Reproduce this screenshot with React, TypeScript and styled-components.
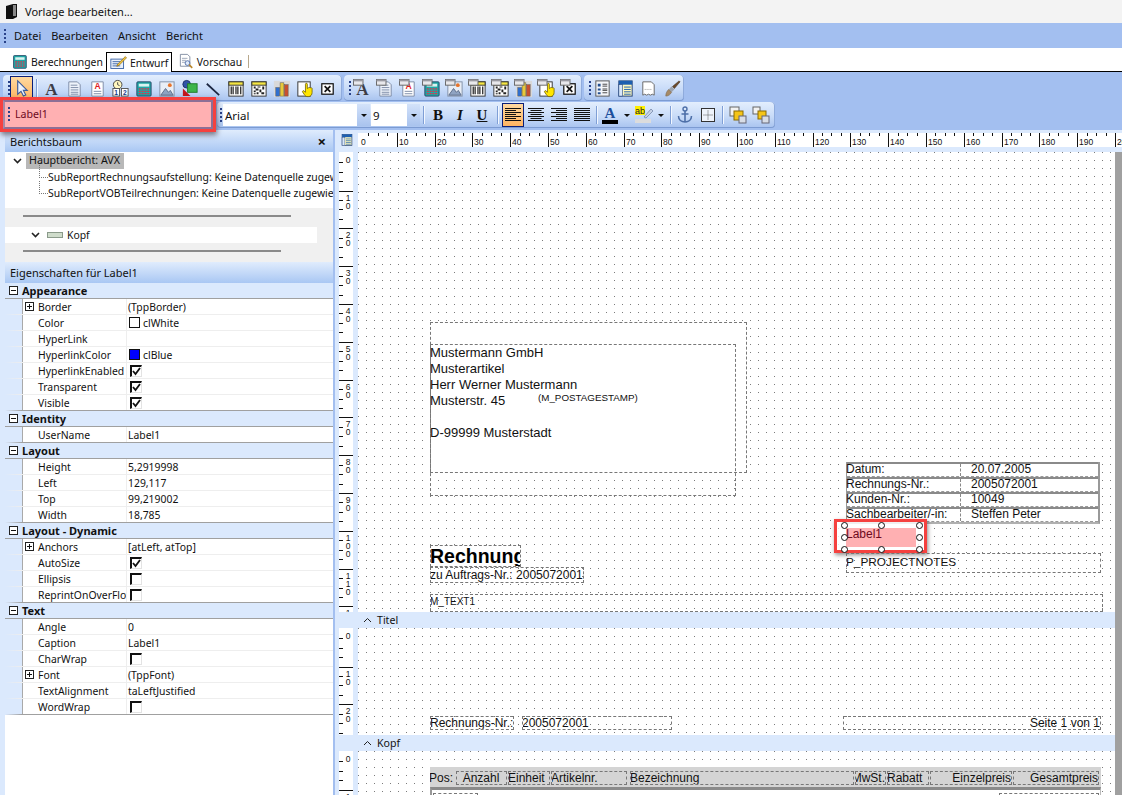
import styled, { createGlobalStyle } from 'styled-components';

const GlobalStyle = createGlobalStyle`
  html, body { margin: 0; padding: 0; background: #fff; }
  body { font-family: "Noto Sans", "Liberation Sans", sans-serif; font-size: 10.4px; color: #111; }
  * { box-sizing: border-box; }
`;

const Page = styled.div`
  width: 1122px;
  height: 795px;
  overflow: hidden;
  display: flex;
  flex-direction: column;
`;

const TitleBar = styled.div`
  height: 23px;
  background: #f3f3f3;
  display: flex;
  align-items: center;
  gap: 8px;
  padding-left: 6px;
  font-size: 11px;
`;

const MenuBar = styled.div`
  height: 25px;
  background: #a3bff0;
  display: flex;
  align-items: center;
  padding-left: 4px;
`;

const Grip = styled.i`
  display: block;
  flex: none;
  width: 2px;
  height: 14px;
  background: repeating-linear-gradient(#29428a 0 2px, transparent 2px 4px);
`;

const MenuItem = styled.span<{ $gap: number }>`
  font-size: 11px;
  margin-left: ${p => p.$gap}px;
`;

const TabStrip = styled.div`
  height: 24px;
  background: #fff;
  border-bottom: 1px solid #000;
  display: flex;
  align-items: flex-end;
  padding-left: 8px;
`;

const Tab = styled.div<{ $active?: boolean; $w: number; $gap?: number }>`
  width: ${p => p.$w}px;
  height: 19px;
  margin-left: ${p => p.$gap ?? 0}px;
  display: flex;
  align-items: center;
  gap: 3px;
  padding-left: 3px;
  font-size: 10.4px;
  background: #fff;
  ${p => (p.$active ? 'border: 1px solid #000; border-bottom: 0; margin-bottom: -1px; height: 20px;' : '')}
`;

const TabDivider = styled.i`
  width: 1px;
  height: 13px;
  background: #b8a88c;
  margin-left: 3px;
`;

const ToolArea = styled.div`
  height: 58px;
  background: #a3bff0;
  padding-top: 3px;
  display: flex;
  flex-direction: column;
  gap: 1px;
`;

const ToolRow = styled.div`
  display: flex;
  height: 26px;
  gap: 2px;
  padding-left: 3px;
`;

const Toolbar = styled.div<{ $w: number; $pad?: number }>`
  width: ${p => p.$w}px;
  height: 26px;
  display: flex;
  align-items: center;
  padding-left: ${p => p.$pad ?? 5}px;
  border-radius: 4px;
  background: linear-gradient(#e3eefd, #c8dbf8 55%, #a8c3ef);
  box-shadow: inset 0 -1px 0 #7c9bd2, inset -1px 0 0 #8fabdc;
`;

const ToolButton = styled.div<{ $on?: boolean; $w?: number }>`
  flex: none;
  width: ${p => p.$w ?? 23}px;
  height: 24px;
  display: flex;
  align-items: center;
  justify-content: center;
  font-family: "Liberation Serif", serif;
  font-size: 15px;
  ${p => (p.$on ? 'background: linear-gradient(#ffd9a0, #ffb562); border: 1px solid #0b1f78;' : '')}
`;

const ToolSep = styled.i<{ $m?: number }>`
  flex: none;
  width: 1px;
  height: 18px;
  margin: 0 ${p => p.$m ?? 3}px;
  background: #7f9fd6;
  box-shadow: 1px 0 0 #f2f7ff;
`;

const ArrowCaret = styled.i`
  flex: none;
  width: 0;
  height: 0;
  margin: 0 4px;
  border: 3px solid transparent;
  border-top: 3px solid #111;
  border-bottom: 0;
`;

const HighlightedBar = styled.div`
  position: relative;
  z-index: 3;
  width: 210px;
  height: 29px;
  margin: -2px 2px 0 0;
  display: flex;
  align-items: center;
  padding: 0 0 2px 3px;
  gap: 5px;
  background: #ffb0b2;
  border: 2px solid #8d6f96;
  border-left-color: #a88aa6;
  color: #6d0a1e;
  font-size: 10.6px;
  box-shadow: 0 0 0 3px #f5413f, 1px 3px 5px 3px rgba(40, 30, 40, 0.55);
`;

const ComboBox = styled.div<{ $w: number }>`
  width: ${p => p.$w}px;
  height: 22px;
  margin-left: 1px;
  background: #fff;
  display: flex;
  align-items: center;
  justify-content: space-between;
  padding-left: 2px;
  font-size: 11.5px;
`;

const ComboArrow = styled.span`
  width: 13px;
  height: 100%;
  background: linear-gradient(#d3e2fa, #a9c3ee);
  display: flex;
  align-items: center;
  justify-content: center;
  &::after {
    content: '';
    border: 3px solid transparent;
    border-top: 3px solid #111;
    border-bottom: 0;
  }
`;

const Main = styled.div`
  flex: 1;
  min-height: 0;
  display: flex;
`;

const SidePanel = styled.div`
  width: 335px;
  flex: none;
  display: flex;
  flex-direction: column;
  background: #fff;
  border-left: 5px solid #dbe9fd;
  border-right: 2px solid #a3bff0;
  overflow: hidden;
`;

const PanelHead = styled.div<{ $h: number }>`
  height: ${p => p.$h}px;
  flex: none;
  display: flex;
  align-items: center;
  justify-content: space-between;
  padding: 0 7px 0 5px;
  background: linear-gradient(#e0ecfd, #a9c7f3);
  font-size: 11px;
  b { font-size: 15px; font-weight: 700; line-height: 1; }
`;

const TreeBox = styled.div`
  height: 56px;
  flex: none;
  padding-top: 1px;
  overflow: hidden;
  white-space: nowrap;
`;

const TreeRoot = styled.div`
  height: 16px;
  display: flex;
  align-items: center;
  padding-left: 8px;
  gap: 4px;
  span { background: #b8b8b8; height: 16px; padding: 0 4px 0 3px; line-height: 15px; font-size: 10.7px; }
`;

const TreeChild = styled.div`
  position: relative;
  height: 16px;
  padding-left: 43px;
  line-height: 16px;
  &::before {
    content: '';
    position: absolute;
    left: 34px;
    top: -4px;
    width: 8px;
    height: 12px;
    border-left: 1px dotted #777;
    border-bottom: 1px dotted #777;
  }
`;

const Shelf = styled.div<{ $h: number; $w: number }>`
  height: ${p => p.$h}px;
  flex: none;
  background: #f0f0f0;
  padding: 7px 0 0 18px;
  &::before {
    content: '';
    display: block;
    width: ${p => p.$w}px;
    height: 2px;
    background: #8a8a8a;
  }
`;

const BandRow = styled.div`
  height: 16px;
  flex: none;
  background: #f0f0f0;
  display: flex;
`;

const BandRowBody = styled.div`
  width: 312px;
  background: #fff;
  display: flex;
  align-items: center;
  padding-left: 26px;
  gap: 4px;
  svg:first-child { margin-right: 3px; }
`;

const PropGrid = styled.div`
  flex: none;
`;

const Category = styled.div`
  height: 16px;
  display: flex;
  align-items: center;
  gap: 4px;
  padding-left: 4px;
  background: #dbe9fd;
  border-bottom: 1px solid #a0a0a0;
  font-weight: 700;
  font-size: 11px;
`;

const ExpandBox = styled.i<{ $plus?: boolean }>`
  display: block;
  position: relative;
  flex: none;
  width: 9px;
  height: 9px;
  border: 1px solid #222;
  background: #fff;
  &::before {
    content: '';
    position: absolute;
    left: 1px;
    top: 3px;
    width: 5px;
    height: 1px;
    background: #111;
  }
  &::after {
    content: '';
    display: ${p => (p.$plus ? 'block' : 'none')};
    position: absolute;
    left: 3px;
    top: 1px;
    width: 1px;
    height: 5px;
    background: #111;
  }
`;

const PropRow = styled.div<{ $last?: boolean }>`
  height: 16px;
  display: flex;
  border-left: 17px solid #dbe9fd;
  border-bottom: 1px solid ${p => (p.$last ? '#a0a0a0' : '#eeeeee')};
`;

const PropName = styled.div`
  width: 104px;
  flex: none;
  display: flex;
  align-items: center;
  padding-left: 15px;
  position: relative;
  border-left: 1px solid #a9a9a9;
  white-space: nowrap;
  overflow: hidden;
  ${ExpandBox} {
    position: absolute;
    left: 2px;
    top: 3px;
  }
`;

const PropValue = styled.div`
  flex: 1;
  display: flex;
  align-items: center;
  gap: 3px;
  padding-left: 1px;
  border-left: 1px solid #eeeeee;
`;

const Swatch = styled.i<{ $c: string }>`
  display: block;
  width: 11px;
  height: 11px;
  margin-left: 1px;
  border: 1px solid #111;
  background: ${p => p.$c};
`;

const CheckBox = styled.i`
  display: flex;
  width: 12px;
  height: 12px;
  margin-left: 2px;
  border-top: 2px solid #111;
  border-left: 2px solid #111;
  border-right: 1px solid #e3e3e3;
  border-bottom: 1px solid #e3e3e3;
  background: #fff;
`;

const Designer = styled.div`
  flex: 1;
  min-width: 0;
  display: flex;
  flex-direction: column;
  background: #dbe9fd;
`;

const RulerRow = styled.div`
  height: 22px;
  flex: none;
  display: flex;
  align-items: flex-start;
  padding: 3px 0 0 5px;
`;

const RulerStrip = styled.div`
  margin-left: 4px;
  width: 764px;
  height: 14px;
  background: #fff;
  overflow: hidden;
`;

const DesignBody = styled.div`
  flex: 1;
  min-height: 0;
  display: flex;
`;

const Sections = styled.div`
  width: 780px;
  flex: none;
  display: flex;
  flex-direction: column;
`;

const ScrollRail = styled.div`
  flex: 1;
  background: #a0a0a0;
`;

const Section = styled.div<{ $h: number }>`
  height: ${p => p.$h}px;
  flex: none;
  display: flex;
  overflow: hidden;
`;

const Gutter = styled.div`
  width: 23px;
  flex: none;
  padding: 0 5px 0 4px;
`;

const GutterStrip = styled.div`
  width: 14px;
  height: 100%;
  background: #fff;
  overflow: hidden;
`;

const Canvas = styled.div`
  position: relative;
  flex: 1;
  background-color: #fff;
  background-image: conic-gradient(at 1px 1px, transparent 75%, #7b7b7b 0);
  background-size: 8px 8px;
  font-family: "Liberation Sans", Arial, sans-serif;
  font-size: 12px;
`;

const BandBar = styled.div`
  height: 16px;
  flex: none;
  background: #dbe9fd;
  display: flex;
  align-items: center;
  padding-left: 28px;
  gap: 5px;
  font-size: 10.6px;
`;

type Box = { $x: number; $y: number; $w: number; $h: number };

const Field = styled.div<Box & { $right?: boolean; $clear?: boolean; $size?: number; $raise?: number }>`
  position: absolute;
  left: ${p => p.$x}px;
  top: ${p => p.$y}px;
  width: ${p => p.$w}px;
  height: ${p => p.$h}px;
  padding-bottom: ${p => p.$raise ?? 0}px;
  border: 1px dashed #777;
  display: flex;
  align-items: center;
  justify-content: ${p => (p.$right ? 'flex-end' : 'flex-start')};
  overflow: hidden;
  white-space: nowrap;
  text-indent: -1px;
  font-size: ${p => p.$size ?? 12}px;
  ${p => (p.$clear ? 'background: #fff;' : '')}
`;

const InvoiceTitle = styled(Field)`
  font-size: 19.5px;
  font-weight: 700;
  color: #000;
  align-items: flex-start;
  line-height: 21px;
  background: #fff;
`;

const AddressBlock = styled.div`
  position: absolute;
  left: 72px;
  top: 193px;
  font-size: 13px;
  line-height: 16px;
  white-space: pre;
`;

const PostageStamp = styled.div`
  position: absolute;
  left: 180px;
  top: 240px;
  font-size: 9.8px;
`;

const InfoTable = styled.div`
  position: absolute;
  left: 488px;
  top: 310px;
  width: 254px;
  border-left: 1px solid #999;
  border-right: 2px solid #999;
  border-bottom: 2px solid #b0b0b0;
  background: #fff;
`;

const InfoRow = styled.div`
  height: 15px;
  display: flex;
  align-items: flex-start;
  border-top: 2px solid #8a8a8a;
  border-bottom: 1px dashed #999;
  line-height: 11px;
`;

const InfoLabel = styled.div`
  width: 114px;
  height: 100%;
  text-indent: -1px;
  border-right: 1px dashed #888;
  white-space: nowrap;
`;

const InfoValue = styled.div`
  padding-left: 10px;
`;

const SelectFrame = styled.div`
  position: absolute;
  left: 476px;
  top: 367px;
  width: 93px;
  height: 34px;
  border: 3px solid #f5413f;
  box-shadow: 1px 2px 4px rgba(40, 30, 30, 0.5);
  background: rgba(255, 255, 255, 0.8);
  padding: 6px 8px 3px 9px;
`;

const SelectFill = styled.div`
  height: 100%;
  background: #ffb0b2;
  color: #6d0a1e;
  line-height: 13px;
  white-space: nowrap;
`;

const Handle = styled.i<{ $x: number; $y: number }>`
  position: absolute;
  left: ${p => p.$x}px;
  top: ${p => p.$y}px;
  width: 7px;
  height: 7px;
  border-radius: 50%;
  border: 1px solid #111;
  background: #fff;
`;

const ColumnBand = styled.div`
  position: absolute;
  left: 72px;
  top: 16px;
  width: 671px;
  height: 20px;
  padding-top: 4px;
  display: flex;
  background: #d4d4d4;
`;

const ColumnCell = styled.div<{ $w: number; $align?: string; $box?: boolean }>`
  width: ${p => p.$w}px;
  height: 14px;
  flex: none;
  margin-right: 1px;
  display: flex;
  align-items: center;
  justify-content: ${p => p.$align ?? 'flex-start'};
  white-space: nowrap;
  overflow: hidden;
  text-indent: -1px;
  ${p => (p.$box ? 'border: 1px dashed #777;' : '')}
`;

const DetailFrame = styled.div`
  position: absolute;
  left: 72px;
  top: 36px;
  width: 671px;
  height: 20px;
  border-top: 3px solid #8a8a8a;
  border-left: 2px solid #999;
  border-right: 1px solid #bbb;
  background: #fff;
`;

const DetailCell = styled.div<{ $x: number; $w: number; $y: number }>`
  position: absolute;
  left: ${p => p.$x}px;
  top: ${p => p.$y}px;
  width: ${p => p.$w}px;
  height: 16px;
  border: 1px dashed #777;
`;

type IconKind =
  | 'pointer' | 'text' | 'memo' | 'label' | 'clock' | 'calc' | 'image' | 'shapes' | 'line'
  | 'barcode' | 'matrix' | 'chart' | 'hand' | 'close' | 'grid' | 'table' | 'page' | 'brush'
  | 'design' | 'preview';

function IconBody({ kind }: { kind: IconKind }) {
  switch (kind) {
    case 'pointer':
      return <path d="M6 2v14l3.500-3 2.500 5 2.500-1.200-2.500-4.800H16z" fill="#eef2fb" stroke="#3a5a9a" strokeWidth="1.200" />;
    case 'text':
      return <text x="10" y="17" textAnchor="middle" fontFamily="Liberation Serif, serif" fontWeight="700" fontSize="18" fill="#3d3d46">A</text>;
    case 'memo':
      return (
        <g>
          <path d="M4 3h9l3 3v12H4z" fill="#eef3fb" stroke="#7d8ca6" />
          <path d="M6 6.500h7M6 9h8M6 11.500h8M6 14h8M6 16h8" stroke="#7d8ca6" />
        </g>
      );
    case 'label':
      return (
        <g>
          <path d="M4 3h12v15H4z" fill="#fff" stroke="#7d8ca6" />
          <text x="10" y="11" textAnchor="middle" fontFamily="Liberation Sans, sans-serif" fontWeight="700" fontSize="9" fill="#e01b24">A</text>
          <path d="M6 13h8M6 15.500h8" stroke="#7d8ca6" />
        </g>
      );
    case 'clock':
      return (
        <g>
          <circle cx="7" cy="6" r="4.500" fill="#fff7c0" stroke="#444" />
          <path d="M7 3.500V6l2 1" stroke="#444" fill="none" />
          <rect x="2" y="10" width="7" height="8" fill="#fff" stroke="#555" />
          <rect x="11" y="10" width="7" height="8" fill="#fff" stroke="#555" />
          <text x="5.500" y="17" textAnchor="middle" fontFamily="Liberation Sans, sans-serif" fontWeight="700" fontSize="7" fill="#123a8a">1</text>
          <text x="14.500" y="17" textAnchor="middle" fontFamily="Liberation Sans, sans-serif" fontWeight="700" fontSize="7" fill="#123a8a">2</text>
        </g>
      );
    case 'calc':
      return (
        <g>
          <rect x="3" y="3" width="15" height="15" rx="1" fill="#1fa7a5" stroke="#2a4a6a" />
          <rect x="5" y="5" width="11" height="3" fill="#d8f3f0" />
          <path d="M5 10.500h2M8 10.500h2M11 10.500h2M14 10.500h2M5 13h2M8 13h2M11 13h2M14 13h2M5 15.500h2M8 15.500h2M11 15.500h2M14 15.500h2" stroke="#e0324b" strokeWidth="1.300" />
        </g>
      );
    case 'image':
      return (
        <g>
          <rect x="3" y="3" width="15" height="15" fill="#e9eef6" stroke="#8090a8" />
          <circle cx="13.500" cy="6.500" r="2" fill="#e8742a" />
          <path d="M4 17l5-7 3 4 2-2 3 5z" fill="#8fa3c2" stroke="#5c6c88" />
        </g>
      );
    case 'shapes':
      return (
        <g>
          <circle cx="7" cy="5.500" r="4" fill="#2f54a8" stroke="#1b2f6a" />
          <rect x="8" y="5" width="10" height="9" fill="#3db54a" stroke="#1e7a2a" />
          <path d="M3 10l8 8H3z" fill="#c4161c" />
        </g>
      );
    case 'line':
      return <path d="M4 5l13 12" stroke="#1c2640" strokeWidth="1.800" />;
    case 'barcode':
      return (
        <g>
          <rect x="3" y="3" width="15" height="15" fill="#fff" stroke="#333" />
          <rect x="3" y="3" width="15" height="3.500" fill="#f5e642" stroke="#333" />
          <path d="M5.500 8v8M7.500 8v8M10.500 8v8M12.500 8v8M15.500 8v8" stroke="#222" strokeWidth="1.300" />
        </g>
      );
    case 'matrix':
      return (
        <g>
          <rect x="3" y="3" width="15" height="15" fill="#fff" stroke="#333" />
          <rect x="3" y="3" width="15" height="3.500" fill="#f5e642" stroke="#333" />
          <path d="M5 8h2v2H5zM9 8h3v1H9zM14 8h2v3h-2zM7 10h3v2H7zM5 12h2v2H5zM11 11h2v3h-2zM8 14h2v2H8zM5 15h2v1H5zM13 14h3v2h-3z" fill="#222" />
        </g>
      );
    case 'chart':
      return (
        <g>
          <rect x="2" y="2" width="17" height="17" fill="#d9d9d9" />
          <rect x="4" y="9" width="4" height="9" fill="#2f6fd0" stroke="#555" strokeWidth=".5" />
          <rect x="8.500" y="4" width="4" height="14" fill="#e8c93a" stroke="#555" strokeWidth=".5" />
          <rect x="13" y="6" width="4" height="12" fill="#c9502e" stroke="#555" strokeWidth=".5" />
        </g>
      );
    case 'hand':
      return (
        <g>
          <rect x="3" y="3" width="13" height="15" fill="#fff" stroke="#333" />
          <path d="M11 5.500c0-1.300 2-1.300 2 0V10l1-.5c.2-.8 1.800-.8 2 0 .3-.5 1.800-.5 2 .4v4.300c0 2.300-1.500 4.300-3.500 4.300h-1.800c-1.200 0-2-.8-2.700-1.800l-2-3c-.6-1.200 1-2 1.800-1L11 14z" fill="#ffe600" stroke="#6a5a00" strokeWidth=".8" />
        </g>
      );
    case 'close':
      return (
        <g>
          <rect x="4" y="5" width="12" height="11" fill="#fff" stroke="#111" strokeWidth="1.300" />
          <path d="M7 7.500l6 6M13 7.500l-6 6" stroke="#111" strokeWidth="1.800" />
        </g>
      );
    case 'grid':
      return (
        <g>
          <rect x="3" y="2" width="14" height="16" fill="#f4f6fa" stroke="#555" />
          <path d="M5 5h3v3H5zM5 10h3v2H5zM5 14h3v2H5z" fill="#24508f" />
          <path d="M10 5.500h5M10 7.500h5M10 10.500h5M10 14.500h5M10 12h5" stroke="#444" />
        </g>
      );
    case 'table':
      return (
        <g>
          <rect x="3" y="2" width="14" height="16" fill="#fff8bd" stroke="#1d3e78" />
          <rect x="3" y="2" width="14" height="4" fill="#1d5fb0" />
          <rect x="3" y="6" width="4" height="12" fill="#d8e7fa" stroke="#1d3e78" strokeWidth=".6" />
          <path d="M8.500 8.500h7M8.500 11h7M8.500 13.500h7M8.500 16h7" stroke="#1d5fb0" />
        </g>
      );
    case 'page':
      return (
        <g>
          <path d="M4 3h9l3 3v11l-2-1-2 1-2-1-2 1-2-1-2 1z" fill="#fff" stroke="#666" />
          <path d="M6 11h8" stroke="#999" strokeDasharray="1 1" />
        </g>
      );
    case 'brush':
      return (
        <g>
          <path d="M18 2l-7 6 2 2 6-7z" fill="#6b4a2a" stroke="#3f2c18" strokeWidth=".6" />
          <path d="M10 8l3 3-3 3-3-3z" fill="#9da5b0" />
          <path d="M7 11l3 3c-1 2-3 4-6 4 0-3 1-5 3-7z" fill="#a68a66" stroke="#7a6446" strokeWidth=".6" />
        </g>
      );
    case 'design':
      return (
        <g>
          <rect x="1" y="6" width="15" height="11" fill="#eaf1fb" stroke="#2f5aa0" />
          <path d="M3 9h9M3 11.500h7M3 14h9" stroke="#2f5aa0" />
          <path d="M9 12l9-9 1.500 1.500-9 9-2.500 1z" fill="#f3c53a" stroke="#7a5a10" strokeWidth=".7" />
        </g>
      );
    case 'preview':
      return (
        <g>
          <path d="M3 1h9l3 3v12H3z" fill="#fff" stroke="#6c7a92" />
          <path d="M5 6h7M5 8.500h5M5 11h4" stroke="#8a96aa" />
          <circle cx="12" cy="12" r="3" fill="#dfeafa" stroke="#3a5a9a" />
          <path d="M14 14l4 4" stroke="#b8862a" strokeWidth="2" />
        </g>
      );
  }
}

function Icon({ kind, docked, size = 19 }: { kind: IconKind; docked?: boolean; size?: number }) {
  return (
    <svg width={size} height={size} viewBox="0 0 20 20">
      <IconBody kind={kind} />
      {docked && (
        <g>
          <rect x=".5" y=".5" width="10" height="6" fill="#e8e8ec" stroke="#666" />
          <rect x=".5" y=".5" width="10" height="2" fill="#9a9aa2" />
        </g>
      )}
    </svg>
  );
}

function AlignIcon({ mode }: { mode: 'left' | 'center' | 'right' | 'full' }) {
  const lines = [16, 11, 16, 11, 16, 11, 16];
  return (
    <svg width="18" height="16" viewBox="0 0 18 16">
      {lines.map((w, i) => {
        const len = mode === 'full' ? 16 : w;
        const x = mode === 'left' || mode === 'full' ? 1 : mode === 'right' ? 17 - len : 9 - len / 2;
        return <rect key={i} x={x} y={1 + i * 2} width={len} height="1" fill="#111" />;
      })}
    </svg>
  );
}

function Chevron({ up }: { up?: boolean }) {
  return (
    <svg width="9" height="6" viewBox="0 0 9 6">
      <path d={up ? 'M1 5l3.500-3.500L8 5' : 'M1 1l3.500 3.500L8 1'} fill="none" stroke="#222" strokeWidth={up ? 1 : 1.6} />
    </svg>
  );
}

function Check() {
  return (
    <svg width="9" height="9" viewBox="0 0 9 9">
      <path d="M1 4l2.500 3L8 1" fill="none" stroke="#111" strokeWidth="1.800" />
    </svg>
  );
}

function TopRuler() {
  const step = 37.8 / 4;
  const ticks = Array.from({ length: 82 }, (_, i) => i);
  return (
    <svg width="764" height="14">
      {ticks.map(i => {
        const x = Math.round(1 + i * step);
        if (i % 4 === 0) {
          return (
            <g key={i}>
              {i > 0 && <rect x={x} y="0" width="1" height="14" fill="#111" />}
              <text x={x + 2} y="12" fontFamily="Liberation Sans, sans-serif" fontSize="8.5" fill="#111">{(i / 4) * 10}</text>
            </g>
          );
        }
        return <rect key={i} x={x} y="0" width="1" height="3" fill="#111" />;
      })}
    </svg>
  );
}

function SideRuler({ height }: { height: number }) {
  const step = 37.8 / 4;
  const count = Math.ceil(height / step) + 1;
  return (
    <svg width="14" height={height}>
      {Array.from({ length: count }, (_, i) => {
        const y = Math.round(0.8 + i * step);
        if (i % 4 === 0) {
          const digits = String((i / 4) * 10).split('');
          return (
            <g key={i}>
              {i > 0 && <rect x="0" y={y} width="14" height="1" fill="#111" />}
              {digits.map((d, n) => (
                <text key={n} x="9" y={y + 10 + n * 8} textAnchor="middle" fontFamily="Liberation Sans, sans-serif" fontSize="8.5" fill="#111">{d}</text>
              ))}
            </g>
          );
        }
        return <rect key={i} x="0" y={y} width="4" height="1" fill="#111" />;
      })}
    </svg>
  );
}

type Prop = { name: string; value?: string; plus?: boolean; swatch?: string; check?: boolean; box?: boolean };

const propGroups: { title: string; props: Prop[] }[] = [
  {
    title: 'Appearance',
    props: [
      { name: 'Border', value: '(TppBorder)', plus: true },
      { name: 'Color', value: 'clWhite', swatch: '#fff' },
      { name: 'HyperLink' },
      { name: 'HyperlinkColor', value: 'clBlue', swatch: '#0000ff' },
      { name: 'HyperlinkEnabled', box: true, check: true },
      { name: 'Transparent', box: true, check: true },
      { name: 'Visible', box: true, check: true },
    ],
  },
  { title: 'Identity', props: [{ name: 'UserName', value: 'Label1' }] },
  {
    title: 'Layout',
    props: [
      { name: 'Height', value: '5,2919998' },
      { name: 'Left', value: '129,117' },
      { name: 'Top', value: '99,219002' },
      { name: 'Width', value: '18,785' },
    ],
  },
  {
    title: 'Layout - Dynamic',
    props: [
      { name: 'Anchors', value: '[atLeft, atTop]', plus: true },
      { name: 'AutoSize', box: true, check: true },
      { name: 'Ellipsis', box: true },
      { name: 'ReprintOnOverFlow', box: true },
    ],
  },
  {
    title: 'Text',
    props: [
      { name: 'Angle', value: '0' },
      { name: 'Caption', value: 'Label1' },
      { name: 'CharWrap', box: true },
      { name: 'Font', value: '(TppFont)', plus: true },
      { name: 'TextAlignment', value: 'taLeftJustified' },
      { name: 'WordWrap', box: true },
    ],
  },
];

const firstTools: IconKind[] = ['text', 'memo', 'label', 'clock', 'calc', 'image', 'shapes', 'line', 'barcode', 'matrix', 'chart', 'hand', 'close'];
const dockedTools: IconKind[] = ['text', 'memo', 'label', 'calc', 'image', 'barcode', 'matrix', 'chart', 'hand', 'close'];
const thirdTools: IconKind[] = ['grid', 'table', 'page', 'brush'];

const infoRows = [
  ['Datum:', '20.07.2005'],
  ['Rechnungs-Nr.:', '2005072001'],
  ['Kunden-Nr.:', '10049'],
  ['Sachbearbeiter/-in:', 'Steffen Peter'],
];

const handles = [
  [7, 3], [44, 3], [82, 3],
  [7, 15], [82, 15],
  [7, 27], [44, 27], [82, 27],
];

const columns: { label: string; w: number; align?: string; box?: boolean }[] = [
  { label: 'Pos:', w: 25 },
  { label: 'Anzahl', w: 51, align: 'center', box: true },
  { label: 'Einheit', w: 42, box: true },
  { label: 'Artikelnr.', w: 76, box: true },
  { label: '', w: 1 },
  { label: 'Bezeichnung', w: 224, box: true },
  { label: 'MwSt.', w: 31, align: 'flex-end', box: true },
  { label: 'Rabatt', w: 42, box: true },
  { label: 'Einzelpreis', w: 82, align: 'flex-end', box: true },
  { label: 'Gesamtpreis', w: 86, align: 'flex-end', box: true },
];

export default function App() {
  return (
    <Page>
      <GlobalStyle />
      <TitleBar>
        <svg width="11" height="15" viewBox="0 0 11 15">
          <path d="M0 2l7-2h4v13l-4 2H0z" fill="#111" />
          <path d="M7 1h3v11H7z" fill="#888" />
        </svg>
        Vorlage bearbeiten...
      </TitleBar>
      <MenuBar>
        <Grip />
        <MenuItem $gap={8}>Datei</MenuItem>
        <MenuItem $gap={10}>Bearbeiten</MenuItem>
        <MenuItem $gap={10}>Ansicht</MenuItem>
        <MenuItem $gap={10}>Bericht</MenuItem>
      </MenuBar>
      <TabStrip>
        <Tab $w={98}>
          <Icon kind="calc" size={17} />
          Berechnungen
        </Tab>
        <Tab $active $w={66}>
          <Icon kind="design" size={17} />
          Entwurf
        </Tab>
        <Tab $w={74} $gap={3}>
          <Icon kind="preview" size={17} />
          Vorschau
          <TabDivider />
        </Tab>
      </TabStrip>
      <ToolArea>
        <ToolRow>
          <Toolbar $w={339}>
            <Grip />
            <ToolButton $on><Icon kind="pointer" /></ToolButton>
            <ToolSep $m={3} />
            {firstTools.map(k => <ToolButton key={k}><Icon kind={k} /></ToolButton>)}
          </Toolbar>
          <Toolbar $w={238}>
            <Grip />
            {dockedTools.map(k => <ToolButton key={k}><Icon kind={k} docked /></ToolButton>)}
          </Toolbar>
          <Toolbar $w={100}>
            <Grip />
            {thirdTools.map(k => <ToolButton key={k}><Icon kind={k} /></ToolButton>)}
          </Toolbar>
        </ToolRow>
        <ToolRow>
          <HighlightedBar>
            <Grip />
            Label1
          </HighlightedBar>
          <Toolbar $w={558} $pad={3}>
            <Grip />
            <ComboBox $w={147}>
              Arial
              <ComboArrow />
            </ComboBox>
            <ComboBox $w={49}>
              9
              <ComboArrow />
            </ComboBox>
            <ToolSep $m={3} />
            <ToolButton $w={22}><b>B</b></ToolButton>
            <ToolButton $w={22}><b><i>I</i></b></ToolButton>
            <ToolButton $w={22}><b><u>U</u></b></ToolButton>
            <ToolSep $m={4} />
            <ToolButton $on $w={22}><AlignIcon mode="left" /></ToolButton>
            <ToolButton><AlignIcon mode="center" /></ToolButton>
            <ToolButton><AlignIcon mode="right" /></ToolButton>
            <ToolButton><AlignIcon mode="full" /></ToolButton>
            <ToolSep $m={3} />
            <ToolButton $w={20}>
              <svg width="18" height="18" viewBox="0 0 18 18">
                <text x="9" y="12" textAnchor="middle" fontFamily="Liberation Serif, serif" fontWeight="700" fontSize="15" fill="#1d4f9c">A</text>
                <rect x="1" y="14" width="16" height="4" fill="#000" />
              </svg>
            </ToolButton>
            <ArrowCaret />
            <ToolButton $w={20}>
              <svg width="18" height="18" viewBox="0 0 18 18">
                <rect x="0" y="0" width="10" height="9" fill="#ffee00" />
                <text x="0" y="8" fontFamily="Liberation Sans, sans-serif" fontSize="9" fill="#222">ab</text>
                <path d="M9 11l7-8 2 2-7 7z" fill="#c6d2e6" stroke="#6b7ea0" strokeWidth=".7" />
                <rect x="0" y="13" width="16" height="4" fill="#dcdcdc" />
              </svg>
            </ToolButton>
            <ArrowCaret />
            <ToolSep $m={2} />
            <ToolButton>
              <svg width="16" height="18" viewBox="0 0 16 18">
                <circle cx="8" cy="3" r="2" fill="none" stroke="#4d6fa8" strokeWidth="1.400" />
                <path d="M8 5v11M4.500 8h7M1.500 10c0 4 3 6 6.500 6s6.500-2 6.500-6" fill="none" stroke="#4d6fa8" strokeWidth="1.600" />
              </svg>
            </ToolButton>
            <ToolButton>
              <svg width="14" height="14" viewBox="0 0 14 14">
                <rect x=".5" y=".5" width="13" height="13" fill="#eef3fb" stroke="#333" />
                <path d="M7 2.500v9M2.500 7h9" stroke="#555" strokeDasharray="1 1" />
              </svg>
            </ToolButton>
            <ToolSep $m={3} />
            <ToolButton>
              <svg width="18" height="18" viewBox="0 0 18 18">
                <rect x="1" y="1" width="9" height="9" fill="#f2f2f2" stroke="#666" />
                <rect x="5" y="5" width="9" height="9" fill="#f5c518" stroke="#8a6a00" />
                <rect x="10" y="10" width="7" height="7" fill="#d8dde6" stroke="#667" />
              </svg>
            </ToolButton>
            <ToolButton>
              <svg width="18" height="18" viewBox="0 0 18 18">
                <rect x="1" y="1" width="7" height="7" fill="#f2f2f2" stroke="#666" />
                <rect x="6" y="5" width="8" height="8" fill="#f5c518" stroke="#8a6a00" />
                <rect x="10" y="10" width="7" height="7" fill="#d8dde6" stroke="#667" />
              </svg>
            </ToolButton>
          </Toolbar>
        </ToolRow>
      </ToolArea>
      <Main>
        <SidePanel>
          <PanelHead $h={22}>
            Berichtsbaum
            <b>×</b>
          </PanelHead>
          <TreeBox>
            <TreeRoot>
              <Chevron />
              <span>Hauptbericht: AVX</span>
            </TreeRoot>
            <TreeChild>SubReportRechnungsaufstellung: Keine Datenquelle zugewiesen</TreeChild>
            <TreeChild>SubReportVOBTeilrechnungen: Keine Datenquelle zugewiesen</TreeChild>
          </TreeBox>
          <Shelf $h={19} $w={268} />
          <BandRow>
            <BandRowBody>
              <Chevron />
              <svg width="16" height="6" viewBox="0 0 16 6">
                <rect x=".5" y=".5" width="15" height="5" fill="#cfdccb" stroke="#8a9a8a" />
              </svg>
              Kopf
            </BandRowBody>
          </BandRow>
          <Shelf $h={19} $w={258} />
          <PanelHead $h={21}>Eigenschaften für Label1</PanelHead>
          <PropGrid>
            {propGroups.map(group => (
              <div key={group.title}>
                <Category>
                  <ExpandBox />
                  {group.title}
                </Category>
                {group.props.map((prop, i) => (
                  <PropRow key={prop.name} $last={i === group.props.length - 1}>
                    <PropName>
                      {prop.plus && <ExpandBox $plus />}
                      {prop.name}
                    </PropName>
                    <PropValue>
                      {prop.swatch && <Swatch $c={prop.swatch} />}
                      {prop.box && <CheckBox>{prop.check && <Check />}</CheckBox>}
                      {prop.value}
                    </PropValue>
                  </PropRow>
                ))}
              </div>
            ))}
          </PropGrid>
        </SidePanel>
        <Designer>
          <RulerRow>
            <Icon kind="table" size={14} />
            <RulerStrip><TopRuler /></RulerStrip>
          </RulerRow>
          <DesignBody>
            <Sections>
              <Section $h={460}>
                <Gutter><GutterStrip><SideRuler height={460} /></GutterStrip></Gutter>
                <Canvas>
                  <Field $x={72} $y={170} $w={317} $h={151} $clear />
                  <Field $x={72} $y={192} $w={306} $h={152} />
                  <AddressBlock>{'Mustermann GmbH\nMusterartikel\nHerr Werner Mustermann\nMusterstr. 45\n\nD-99999 Musterstadt'}</AddressBlock>
                  <PostageStamp>(M_POSTAGESTAMP)</PostageStamp>
                  <InfoTable>
                    {infoRows.map(([label, value]) => (
                      <InfoRow key={label}>
                        <InfoLabel>{label}</InfoLabel>
                        <InfoValue>{value}</InfoValue>
                      </InfoRow>
                    ))}
                  </InfoTable>
                  <SelectFrame><SelectFill>Label1</SelectFill></SelectFrame>
                  {handles.map(([x, y]) => <Handle key={`${x}-${y}`} $x={476 + x} $y={367 + y} />)}
                  <Field $x={488} $y={401} $w={255} $h={20} $size={11.8} $raise={3}>P_PROJECTNOTES</Field>
                  <InvoiceTitle $x={72} $y={393} $w={91} $h={22}>Rechnung</InvoiceTitle>
                  <Field $x={72} $y={415} $w={154} $h={16}>zu Auftrags-Nr.: 2005072001</Field>
                  <Field $x={72} $y={442} $w={673} $h={18} $size={10} $raise={3}>M_TEXT1</Field>
                </Canvas>
              </Section>
              <BandBar><Chevron up />Titel</BandBar>
              <Section $h={107}>
                <Gutter><GutterStrip><SideRuler height={107} /></GutterStrip></Gutter>
                <Canvas>
                  <Field $x={72} $y={88} $w={84} $h={14}>Rechnungs-Nr.:</Field>
                  <Field $x={164} $y={88} $w={150} $h={14}>2005072001</Field>
                  <Field $x={485} $y={88} $w={258} $h={14} $right>Seite 1 von 1</Field>
                </Canvas>
              </Section>
              <BandBar><Chevron up />Kopf</BandBar>
              <Section $h={44}>
                <Gutter><GutterStrip><SideRuler height={44} /></GutterStrip></Gutter>
                <Canvas>
                  <ColumnBand>
                    {columns.map((c, i) => (
                      <ColumnCell key={i} $w={c.w} $align={c.align} $box={c.box}>{c.label}</ColumnCell>
                    ))}
                  </ColumnBand>
                  <DetailFrame>
                    <DetailCell $x={1} $y={3} $w={45} />
                    <DetailCell $x={567} $y={3} $w={100} />
                  </DetailFrame>
                </Canvas>
              </Section>
            </Sections>
            <ScrollRail />
          </DesignBody>
        </Designer>
      </Main>
    </Page>
  );
}
